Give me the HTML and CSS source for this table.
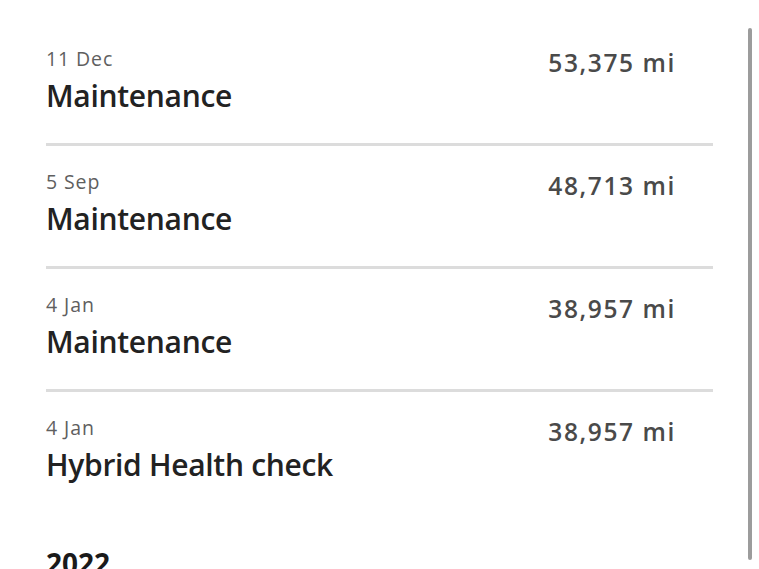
FILE: index.html
```html
<!DOCTYPE html>
<html lang="en">
<head>
<meta charset="utf-8">
<link rel="stylesheet" href="styles.css">
<title>Service history</title>
</head>
<body>
<div class="page">
  <ul class="history">
    <li class="entry">
      <div class="info">
        <div class="date">11 Dec</div>
        <div class="title">Maintenance</div>
      </div>
      <div class="miles">53,375 mi</div>
    </li>
    <li class="entry">
      <div class="info">
        <div class="date">5 Sep</div>
        <div class="title">Maintenance</div>
      </div>
      <div class="miles">48,713 mi</div>
    </li>
    <li class="entry">
      <div class="info">
        <div class="date">4 Jan</div>
        <div class="title">Maintenance</div>
      </div>
      <div class="miles">38,957 mi</div>
    </li>
    <li class="entry">
      <div class="info">
        <div class="date">4 Jan</div>
        <div class="title">Hybrid Health check</div>
      </div>
      <div class="miles">38,957 mi</div>
    </li>
  </ul>
  <h2 class="year">2022</h2>
  <div class="scrollbar"></div>
</div>
</body>
</html>
```
FILE: styles.css
```css
html, body {
  margin: 0;
  padding: 0;
  background: #ffffff;
}
body {
  font-family: "Open Sans", "Noto Sans", sans-serif;
  overflow: hidden;
  height: 569px;
}
.page {
  position: relative;
  padding: 23px 0 0 46px;
  height: 569px;
  box-sizing: border-box;
}
.history {
  list-style: none;
  margin: 0;
  padding: 0;
  width: 667px;
}
.entry {
  display: flex;
  justify-content: space-between;
  align-items: flex-start;
  padding: 24px 37px 29px 0;
  border-bottom: 3px solid #dcdcdc;
}
.entry:last-child {
  border-bottom: none;
}
.info {
  display: flex;
  flex-direction: column;
  gap: 7px;
}
.date {
  font-size: 19.5px;
  line-height: 24px;
  color: #5f5f5f;
  letter-spacing: 0.9px;
}
.title {
  font-size: 30px;
  line-height: 36px;
  font-weight: 600;
  color: #222222;
  letter-spacing: -0.3px;
}
.miles {
  margin-top: 1px;
  font-size: 24.5px;
  line-height: 30px;
  color: #4a4a4a;
  font-weight: 600;
  letter-spacing: 1.6px;
}
.year {
  margin: 34px 0 0 0;
  font-size: 28px;
  line-height: 34px;
  font-weight: 700;
  color: #1a1a1a;
}
.scrollbar {
  position: absolute;
  left: 748px;
  top: 28px;
  width: 4px;
  height: 532px;
  border-radius: 2px;
  background: #9c9c9c;
}
```
